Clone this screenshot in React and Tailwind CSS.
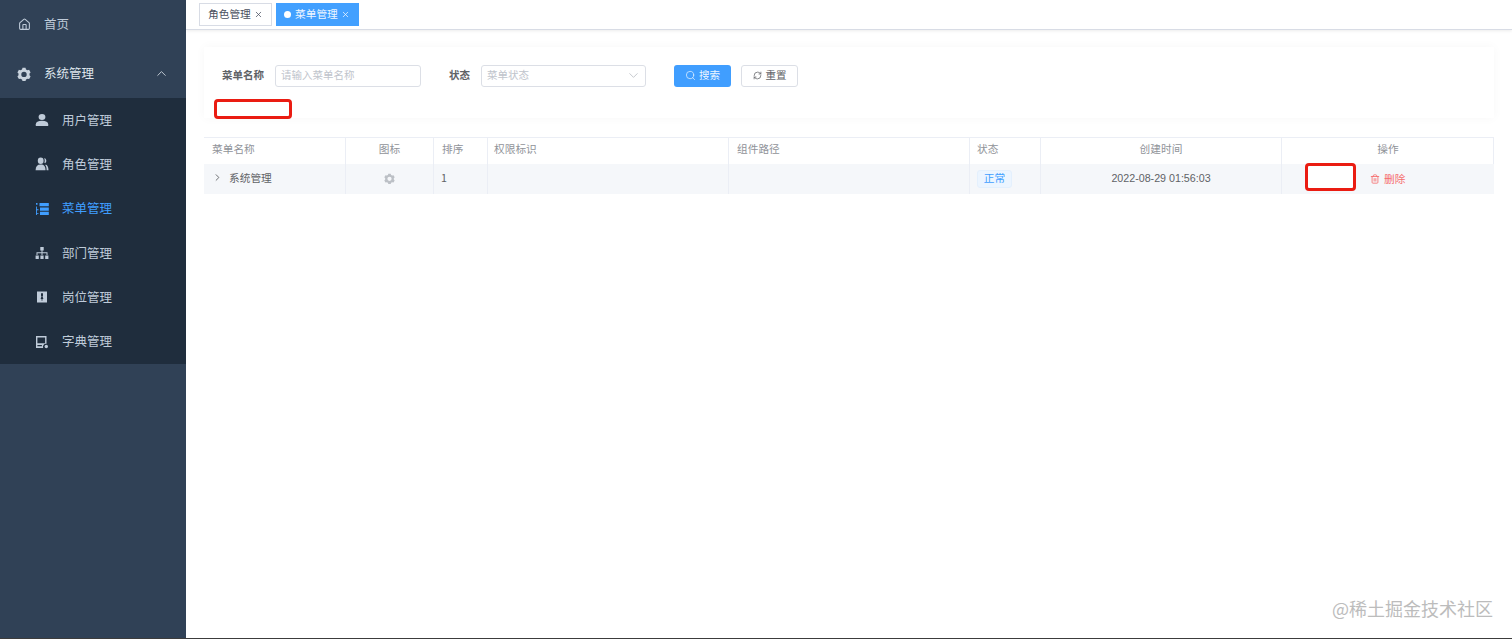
import React from 'react';
import { Home, ChevronUp, ChevronDown, ChevronRight, X, Search, RefreshCw, Trash2 } from 'lucide-react';

const GearIcon = ({ className }) => (
  <svg viewBox="0 0 14 14" className={className} fill="currentColor">
    <path fillRule="evenodd" d="M5.500.8h3l.5 1.600 1.500.8 1.600-.4 1.500 2.600-1.100 1.200v1.700l1.100 1.200-1.500 2.600-1.600-.4-1.500.8-.5 1.600h-3l-.5-1.600-1.500-.8-1.600.4L.4 9.500l1.100-1.200V6.600L.4 5.400l1.500-2.600 1.600.4 1.500-.8zM7 4.700a2.700 2.700 0 1 0 0 5.400 2.700 2.700 0 0 0 0-5.400z" />
  </svg>
);

const UserIcon = () => (
  <svg viewBox="0 0 14 14" className="w-[14px] h-[14px]" fill="currentColor">
    <ellipse cx="7" cy="4" rx="3.400" ry="3" />
    <path d="M.8 13v-1.800C.8 9 3 7.800 7 7.800s6.200 1.200 6.200 3.400V13z" />
  </svg>
);

const RoleIcon = () => (
  <svg viewBox="0 0 14 14" className="w-[14px] h-[14px]" fill="currentColor">
    <ellipse cx="5.700" cy="3.800" rx="2.900" ry="3.200" />
    <path d="M.6 13.200c0-3.600 1.700-5.600 5.100-5.600s4.800 2 4.800 5.600z" />
    <path d="M9.200 1a3 3 0 0 1 .9 5.300l-.7-.6c.5-1.400.4-3.200-.2-4.700zM10.800 7.600c1.700.7 2.600 2.700 2.700 5.600h-1.900c0-2-.2-3.700-1.300-5z" />
  </svg>
);

const MenuIcon = () => (
  <svg viewBox="0 0 14 14" className="w-[14px] h-[14px]" fill="currentColor">
    <path d="M1 1h1.500v1.800H1zM1 4.500h.9V13H1zM1.900 7.300h1.600v.9H1.900zM1.900 11.200h1.600v.9H1.900z" />
    <path d="M4.500 1h9.300v3.300H4.500zM5 5.500h8.800v3.200H5zM5 9.800h8.800V13H5z" />
  </svg>
);

const DeptIcon = () => (
  <svg viewBox="0 0 14 14" className="w-[14px] h-[14px]" fill="currentColor">
    <path d="M5.300 1h3.400v3.400H7.500V6.300h5v2.700h-1V7.300h-4V9h-1V7.300h-4V9h-1V6.300h5V4.400H5.300z" />
    <path d="M.6 9.500h3.200V13H.6zM5.400 9.500h3.200V13H5.400zM10.200 9.500h3.200V13h-3.200z" />
  </svg>
);

const PostIcon = () => (
  <svg viewBox="0 0 14 14" className="w-[14px] h-[14px]" fill="currentColor">
    <path fillRule="evenodd" d="M2 1.500h10v11H2zM6 3.300v2.400l.5.500L5.600 9h1v1.800h.8V9h1l-.9-2.800.5-.5V3.300z" />
  </svg>
);

const DictIcon = () => (
  <svg viewBox="0 0 14 14" className="w-[14px] h-[14px]" fill="currentColor">
    <path fillRule="evenodd" d="M1 1h10.500v7.800a3 3 0 0 0-3.300 4.200H1zM2.400 2.500v5.800h7.700V2.500zM2.400 10v1.200h4.500V10z" />
    <circle cx="11.300" cy="11.500" r="1.700" />
  </svg>
);

const subMenus = [
  { name: '用户管理', icon: <UserIcon /> },
  { name: '角色管理', icon: <RoleIcon /> },
  { name: '菜单管理', icon: <MenuIcon />, active: true },
  { name: '部门管理', icon: <DeptIcon /> },
  { name: '岗位管理', icon: <PostIcon /> },
  { name: '字典管理', icon: <DictIcon /> },
];

const headers = ['菜单名称', '图标', '排序', '权限标识', '组件路径', '状态', '创建时间', '操作'];
const headerPad = ['pl-[8px]', 'justify-center', 'pl-[8px]', 'pl-[6px]', 'pl-[8px]', 'pl-[7px]', 'justify-center', 'justify-center'];
const gridCols = 'grid grid-cols-[142px_88px_54px_241px_241px_71px_241px_212px]';

const Sidebar = () => (
  <aside className="w-[186px] shrink-0 h-full bg-[#304156] text-[12.5px] text-[#bfcbd9]">
    <div className="h-[49px] flex items-center pl-[18px] pb-[1px]">
      <Home className="w-[13px] h-[13px] mr-[13px]" strokeWidth={2} />
      <span>首页</span>
    </div>
    <div className="h-[49px] flex items-center pl-[17px] pr-[17px] text-[#dfe5ec]">
      <GearIcon className="w-[14px] h-[14px] mr-[13px] text-[#c8d2dd]" />
      <span>系统管理</span>
      <ChevronUp className="w-[15px] h-[15px] ml-auto" strokeWidth={1.3} />
    </div>
    <div className="bg-[#1f2d3d] h-[266px] flex flex-col">
      {subMenus.map((item) => (
        <div
          key={item.name}
          className={`flex-1 flex items-center pl-[35px] ${item.active ? 'text-[#409eff]' : 'text-[#bfcbd9]'}`}
        >
          <span className="w-[14px] flex justify-center mr-[13px]">{item.icon}</span>
          <span>{item.name}</span>
        </div>
      ))}
    </div>
  </aside>
);

const TagsBar = () => (
  <div className="h-[30px] border-b border-[#d8dce5] shadow-[0_1px_3px_rgba(0,0,0,0.08)] flex items-start pt-[3px] pl-[13px] gap-[4px] text-[10.7px]">
    <div className="h-[23px] w-[73px] border border-[#d8dce5] bg-white text-[#495060] flex items-center pl-[8px] pb-[1px]">
      角色管理
      <X className="w-[9px] h-[9px] ml-[3px] mt-[1px]" />
    </div>
    <div className="h-[23px] w-[83px] bg-[#42a0ff] text-[#eef6ff] flex items-center pl-[8px] pb-[1px]">
      <span className="w-[7px] h-[7px] rounded-full bg-white mr-[4px] mt-[1px]" />
      菜单管理
      <X className="w-[9px] h-[9px] ml-[3px] mt-[1px]" />
    </div>
  </div>
);

const SearchCard = () => (
  <div className="mt-[17px] ml-[18px] w-[1290px] h-[71px] shadow-[0_0_10px_rgba(0,0,0,0.035)] relative">
    <div className="flex items-center pt-[18px] pl-[18px] text-[10.5px] leading-[14px]">
      <span className="font-bold text-[#606266] w-[53px] -mt-[2px]">菜单名称</span>
      <div className="w-[146px] h-[22px] border border-[#dcdfe6] rounded-[3px] flex items-center pl-[5px] pb-[2px] text-[#c0c4cc]">
        请输入菜单名称
      </div>
      <span className="font-bold text-[#606266] ml-[28px] w-[32px] -mt-[2px]">状态</span>
      <div className="w-[165px] h-[22px] border border-[#dcdfe6] rounded-[3px] flex items-center pl-[5px] pr-[4px] pb-[2px] text-[#c0c4cc]">
        菜单状态
        <ChevronDown className="w-[15px] h-[15px] ml-auto text-[#aeb2b9]" strokeWidth={1.1} />
      </div>
      <button className="ml-[28px] w-[57px] h-[22px] bg-[#409eff] rounded-[3px] text-[#eef6ff] flex items-center justify-center gap-[3px] pb-[2px]">
        <Search className="w-[11px] h-[11px] mt-[1px]" strokeWidth={1.5} />
        搜索
      </button>
      <button className="ml-[10px] w-[57px] h-[22px] border border-[#dcdfe6] rounded-[3px] text-[#606266] flex items-center justify-center gap-[4px] pb-[2px]">
        <RefreshCw className="w-[9px] h-[9px] mt-[1px]" />
        重置
      </button>
    </div>
    {/* blank button outlined in red */}
    <div className="mt-[12px] ml-[10px] w-[78px] h-[20px] border-[3px] border-[#ea1c12] rounded-[4px] bg-white" />
  </div>
);

const MenuTable = () => (
  <div className="mt-[19px] ml-[18px] w-[1290px] text-[10.7px] text-[#606266] border-t border-[#ebeef5]">
    <div className={`${gridCols} h-[26px] items-center text-[#909399] border-r border-[#ebeef5]`}>
      {headers.map((h, i) => (
        <div key={h} className={`h-full flex items-center pb-[3px] border-r border-[#ebeef5] last:border-r-0 ${headerPad[i]}`}>
          {h}
        </div>
      ))}
    </div>
    <div className={`${gridCols} h-[30px] items-center bg-[#f5f7fa]`}>
      <div className="h-full flex items-center pl-[8px] pb-[2px] border-r border-[#ebeef5]">
        <ChevronRight className="w-[11px] h-[11px] mr-[6px] -mt-[1px]" />
        系统管理
      </div>
      <div className="h-full flex items-center justify-center pb-[2px] border-r border-[#ebeef5]">
        <GearIcon className="w-[11px] h-[11px] text-[#bcc0c6]" />
      </div>
      <div className="h-full flex items-center pl-[7px] pb-[2px] border-r border-[#ebeef5]">1</div>
      <div className="h-full border-r border-[#ebeef5]" />
      <div className="h-full border-r border-[#ebeef5]" />
      <div className="h-full flex items-center pl-[7px] border-r border-[#ebeef5]">
        <span className="w-[35px] h-[18px] bg-[#ecf5ff] border border-[#e4f0fd] rounded-[3px] text-[#409eff] flex items-center justify-center pb-[2px]">
          正常
        </span>
      </div>
      <div className="h-full flex items-center justify-center pb-[1px] border-r border-[#ebeef5] font-['Liberation_Sans',sans-serif]">
        2022-08-29 01:56:03
      </div>
      <div className="h-full flex items-center pl-[23px]">
        <div className="w-[51px] h-[28px] -mt-[4px] border-[3px] border-[#ea1c12] rounded-[4px] bg-white" />
        <span className="ml-[14px] flex items-center gap-[4px] text-[#f56c6c]">
          <Trash2 className="w-[10px] h-[10px]" />
          删除
        </span>
      </div>
    </div>
  </div>
);

const App = () => (
  <div className="relative w-[1512px] h-[639px] overflow-hidden bg-white flex border-b border-[#3c3c3c] font-['Noto_Sans_CJK_SC','Liberation_Sans',sans-serif]">
    <Sidebar />
    <main className="flex-1">
      <TagsBar />
      <SearchCard />
      <MenuTable />
    </main>
    {/* watermark */}
    <span className="absolute right-[19px] bottom-[18px] text-[18px] leading-[24px] text-[#bcbcbc]">@稀土掘金技术社区</span>
  </div>
);

export default App;
